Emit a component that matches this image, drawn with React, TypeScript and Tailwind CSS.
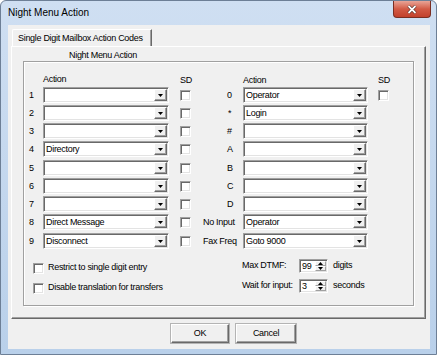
import React from 'react';

type Row = {
  l: string;
  lv: string;
  r: string;
  rv: string;
  rpl: string;
  rsd: boolean;
  h: string;
};

const rows: Row[] = [
  { l: '1', lv: '', r: '0', rv: 'Operator', rpl: 'pl-[36px]', rsd: true, h: 'h-[18px]' },
  { l: '2', lv: '', r: '*', rv: 'Login', rpl: 'pl-[37px]', rsd: false, h: 'h-[18px]' },
  { l: '3', lv: '', r: '#', rv: '', rpl: 'pl-[36px]', rsd: false, h: 'h-[18px]' },
  { l: '4', lv: 'Directory', r: 'A', rv: '', rpl: 'pl-[36px]', rsd: false, h: 'h-[19px]' },
  { l: '5', lv: '', r: 'B', rv: '', rpl: 'pl-[36px]', rsd: false, h: 'h-[18px]' },
  { l: '6', lv: '', r: 'C', rv: '', rpl: 'pl-[36px]', rsd: false, h: 'h-[18px]' },
  { l: '7', lv: '', r: 'D', rv: '', rpl: 'pl-[36px]', rsd: false, h: 'h-[18px]' },
  { l: '8', lv: 'Direct Message', r: 'No Input', rpl: 'pl-[12px]', rv: 'Operator', rsd: false, h: 'h-[19px]' },
  { l: '9', lv: 'Disconnect', r: 'Fax Freq', rpl: 'pl-[12px]', rv: 'Goto 9000', rsd: false, h: 'h-[16px]' },
];

// sunken 3D edge, classic windows style
const sunken =
  'border border-t-[#a0a0a0] border-l-[#a0a0a0] border-r-white border-b-white shadow-[inset_1px_1px_0_#696969,inset_-1px_-1px_0_#e3e3e3]';

function Combo({ value, w }: { value: string; w: string }) {
  return (
    <div className={`${w} h-[16px] flex bg-white p-[1px] ${sunken}`}>
      <div className="flex-1 pl-[1px] leading-[12px] whitespace-nowrap overflow-hidden">{value}</div>
      <div className="w-[13px] h-[12px] flex items-center justify-center bg-[#f0f0f0] border border-t-white border-l-white border-r-[#696969] border-b-[#696969] shadow-[inset_-1px_-1px_0_#a0a0a0]">
        <svg width="5" height="3" viewBox="0 0 5 3" className="mt-[1px]">
          <path d="M0 0H5L2.5 3Z" fill="#000" />
        </svg>
      </div>
    </div>
  );
}

function Check() {
  return <div className={`w-[11px] h-[11px] bg-white ${sunken}`} />;
}

function Spinner({ value }: { value: string }) {
  return (
    <div className={`w-[29px] h-[14px] flex bg-white p-[1px] ${sunken}`}>
      <div className="flex-1 pl-[1px] leading-[10px]">{value}</div>
      <div className="w-[11px] flex flex-col">
        <div className="flex-1 flex items-center justify-center bg-[#f0f0f0] border border-t-white border-l-white border-r-[#a0a0a0] border-b-[#a0a0a0]">
          <svg width="5" height="3" viewBox="0 0 5 3">
            <path d="M0 3H5L2.5 0Z" fill="#000" />
          </svg>
        </div>
        <div className="flex-1 flex items-center justify-center bg-[#f0f0f0] border border-t-white border-l-white border-r-[#a0a0a0] border-b-[#a0a0a0]">
          <svg width="5" height="3" viewBox="0 0 5 3">
            <path d="M0 0H5L2.5 3Z" fill="#000" />
          </svg>
        </div>
      </div>
    </div>
  );
}

function Button({ label, w }: { label: string; w: string }) {
  return (
    <div
      className={`${w} h-[19px] flex items-center justify-center bg-[#f0f0f0] border border-t-white border-l-white border-r-[#696969] border-b-[#696969] shadow-[inset_-1px_-1px_0_#a0a0a0,0_0_0_1px_#b4b4b4]`}
    >
      {label}
    </div>
  );
}

export default function App() {
  return (
    <div className="w-[437px] h-[355px] flex flex-col bg-linear-to-b from-[#cfdff2] to-[#b9d0ea] border border-[#6d7f96] rounded-t-[6px] overflow-hidden font-['Liberation_Sans',sans-serif] text-[9px] tracking-[-0.3px] text-black">
      {/* Title bar */}
      <div className="h-[24px] flex items-start justify-between">
        <div className="pt-[6px] pl-[7px] text-[10px] leading-[12px] tracking-normal">Night Menu Action</div>
        <div className="mr-[5px] w-[38px] h-[17px] flex items-center justify-center rounded-b-[4px] border border-t-0 border-[#7a2e22] bg-linear-to-b from-[#e8a497] via-[#d25a45] to-[#c2412c]">
          <svg width="10" height="9" viewBox="0 0 10 9">
            <path d="M1.5 1L8.5 8M8.5 1L1.5 8" stroke="#3a1a14" strokeWidth="3" />
            <path d="M1.5 1L8.5 8M8.5 1L1.5 8" stroke="#fff" strokeWidth="1.8" />
          </svg>
        </div>
      </div>

      {/* Client area */}
      <div className="flex-1 ml-[7px] mr-[6px] mb-[5px] flex flex-col bg-[#f0f0f0] pl-[3px] pr-[4px] pt-[4px]">
        {/* Tab strip */}
        <div className="h-[17px] flex">
          <div className="ml-[1px] w-[140px] h-[17px] pl-[5px] leading-[16px] whitespace-nowrap rounded-tl-[2px] border-t border-l border-white border-r border-r-[#696969] shadow-[inset_-1px_0_0_#a0a0a0]">
            Single Digit Mailbox Action Codes
          </div>
        </div>

        {/* Tab pane */}
        <div className="h-[273px] pt-[3px] border border-t-white border-l-white border-r-[#696969] border-b-[#696969] shadow-[inset_-1px_-1px_0_#a0a0a0]">
          <div className="ml-[57px] leading-[11px]">Night Menu Action</div>

          {/* Group box */}
          <div className="ml-[11px] w-[391px] h-[245px] pt-[11px] flex flex-col border border-[#a0a0a0] shadow-[inset_1px_1px_0_#fff,1px_1px_0_#fff]">
            <div className="flex h-[12px] leading-[12px]">
              <span className="ml-[19px] w-[137px]">Action</span>
              <span className="w-[63px] pt-[1px]">SD</span>
              <span className="w-[135px] pt-[1px]">Action</span>
              <span className="pt-[1px]">SD</span>
            </div>

            <div className="mt-[2px] flex flex-col">
              {rows.map((r) => (
                <div key={r.l} className={`flex items-start ${r.h}`}>
                  <span className="w-[19px] pl-[5px] h-[16px] leading-[17px]">{r.l}</span>
                  <Combo value={r.lv} w="w-[126px]" />
                  <div className="ml-[11px] h-[16px] flex items-center">
                    <Check />
                  </div>
                  <span className={`w-[52px] h-[16px] leading-[16px] whitespace-nowrap ${r.rpl}`}>{r.r}</span>
                  <Combo value={r.rv} w="w-[125px]" />
                  {r.rsd && (
                    <div className="ml-[10px] h-[16px] flex items-center">
                      <Check />
                    </div>
                  )}
                </div>
              ))}
            </div>

            {/* Options */}
            <div className="mt-[10px] flex">
              <div className="w-[218px] pt-[2px] flex flex-col gap-[6px]">
                <div className="h-[14px] pl-[9px] flex items-center">
                  <Check />
                  <span className="ml-[4px]">Restrict to single digit entry</span>
                </div>
                <div className="h-[14px] pl-[9px] flex items-center">
                  <Check />
                  <span className="ml-[4px]">Disable translation for transfers</span>
                </div>
              </div>
              <div className="flex flex-col gap-[6px]">
                <div className="h-[14px] flex items-center">
                  <span className="w-[57px]">Max DTMF:</span>
                  <Spinner value="99" />
                  <span className="ml-[5px]">digits</span>
                </div>
                <div className="h-[14px] flex items-center">
                  <span className="w-[57px] whitespace-nowrap">Wait for input:</span>
                  <Spinner value="3" />
                  <span className="ml-[5px]">seconds</span>
                </div>
              </div>
            </div>
          </div>
        </div>

        {/* Dialog buttons */}
        <div className="mt-[5px] flex gap-[7px]">
          <div className="ml-[160px]">
            <Button label="OK" w="w-[58px]" />
          </div>
          <Button label="Cancel" w="w-[60px]" />
        </div>
      </div>
    </div>
  );
}
